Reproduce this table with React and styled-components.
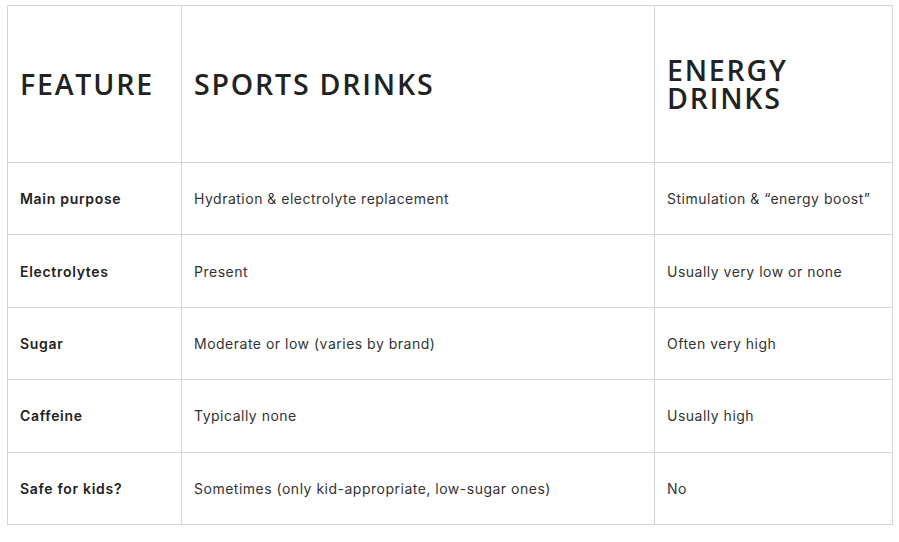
import React from 'react';
import styled, { createGlobalStyle } from 'styled-components';

const GlobalStyle = createGlobalStyle`
  body {
    margin: 0;
    background: #ffffff;
  }
`;

const Page = styled.div`
  padding: 5px 7px;
`;

const Table = styled.table`
  width: 885px;
  border-collapse: collapse;
  table-layout: fixed;
  font-family: Inter, "Liberation Sans", sans-serif;
`;

const HeadCell = styled.th`
  height: 156px;
  padding: 0 12px;
  border: 1px solid #d4d4d4;
  text-align: left;
  vertical-align: middle;
  font-family: "Open Sans", "Liberation Sans", sans-serif;
  font-weight: 600;
  font-size: 28.5px;
  line-height: 28px;
  letter-spacing: 1.8px;
  color: #222222;
  text-transform: uppercase;
`;

const Cell = styled.td`
  height: 71.4px;
  padding: 0 12px;
  border: 1px solid #d4d4d4;
  vertical-align: middle;
  font-size: 14px;
  font-weight: ${(p) => (p.$label ? 600 : 400)};
  letter-spacing: ${(p) => (p.$label ? '0.7px' : '0.5px')};
  color: ${(p) => (p.$label ? '#222222' : '#333333')};
`;

const rows = [
  ['Main purpose', 'Hydration & electrolyte replacement', 'Stimulation & “energy boost”'],
  ['Electrolytes', 'Present', 'Usually very low or none'],
  ['Sugar', 'Moderate or low (varies by brand)', 'Often very high'],
  ['Caffeine', 'Typically none', 'Usually high'],
  ['Safe for kids?', 'Sometimes (only kid-appropriate, low-sugar ones)', 'No'],
];

export default function App() {
  return (
    <>
      <GlobalStyle />
      <Page>
        <Table>
          <colgroup>
            <col style={{ width: 174 }} />
            <col style={{ width: 473 }} />
            <col style={{ width: 238 }} />
          </colgroup>
          <thead>
            <tr>
              <HeadCell>Feature</HeadCell>
              <HeadCell>Sports Drinks</HeadCell>
              <HeadCell>Energy Drinks</HeadCell>
            </tr>
          </thead>
          <tbody>
            {rows.map(([label, sports, energy]) => (
              <tr key={label}>
                <Cell $label>{label}</Cell>
                <Cell>{sports}</Cell>
                <Cell>{energy}</Cell>
              </tr>
            ))}
          </tbody>
        </Table>
      </Page>
    </>
  );
}
